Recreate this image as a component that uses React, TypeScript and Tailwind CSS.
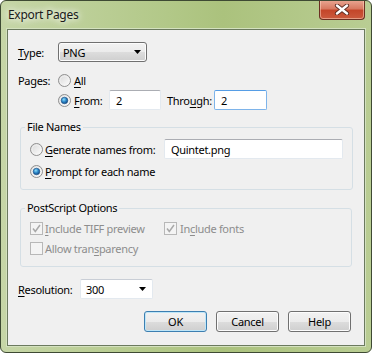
import type { ReactNode } from 'react'

function Radio({ checked = false }: { checked?: boolean }) {
  return (
    <svg width="13" height="13" viewBox="0 0 13 13" className="shrink-0">
      <defs>
        <linearGradient id="rbg" x1="0" y1="0" x2="1" y2="1">
          <stop offset="0" stopColor="#d6d6d6" />
          <stop offset="1" stopColor="#ffffff" />
        </linearGradient>
        <radialGradient id="rdot" cx="0.4" cy="0.35" r="0.7">
          <stop offset="0" stopColor="#8fe0fa" />
          <stop offset="0.5" stopColor="#2c86c8" />
          <stop offset="1" stopColor="#10427a" />
        </radialGradient>
      </defs>
      <circle cx="6.5" cy="6.5" r="6" fill="url(#rbg)" stroke="#8f8f8f" />
      <circle cx="6.5" cy="6.5" r="4.5" fill="none" stroke="#f4f4f4" strokeOpacity="0.7" />
      {checked && <circle cx="6.5" cy="6.5" r="3.3" fill="url(#rdot)" stroke="#1b4f86" strokeWidth="0.6" />}
    </svg>
  )
}

function Check({ checked = false }: { checked?: boolean }) {
  return (
    <svg width="13" height="13" viewBox="0 0 13 13" className="shrink-0">
      <rect x="0.5" y="0.5" width="12" height="12" fill="#f4f4f4" stroke="#b8b8b8" />
      {checked && <path d="M3 6.5 L5.3 9.5 L10 3" fill="none" stroke="#a9a9a9" strokeWidth="1.5" />}
    </svg>
  )
}

function Arrow() {
  return (
    <svg width="7" height="4" viewBox="0 0 7 4" className="shrink-0">
      <path d="M0 0 H7 L3.5 4 Z" fill="#000" />
    </svg>
  )
}

function TextBox({ value, focused = false, className = '' }: { value: string; focused?: boolean; className?: string }) {
  return (
    <div
      className={
        'h-[20px] bg-white flex items-center pl-[6px] border rounded-[2px] ' +
        (focused ? 'border-[#7eb4ea] border-t-[#569de5] ' : 'border-[#e3e9ef] border-t-[#abadb3] ') +
        className
      }
    >
      {value}
    </div>
  )
}

function Btn({ children, primary = false }: { children: ReactNode; primary?: boolean }) {
  return (
    <div
      className={
        'w-[63px] h-[21px] rounded-[3px] border flex items-center justify-center bg-[linear-gradient(#f2f2f2_0%,#ebebeb_50%,#dddddd_50%,#cfcfcf_100%)] ' +
        (primary ? 'border-[#3c7fb1] shadow-[inset_0_0_0_1px_#bfe6f8]' : 'border-[#707070] shadow-[inset_0_0_0_1px_#fcfcfc]')
      }
    >
      {children}
    </div>
  )
}

const U = ({ children }: { children: ReactNode }) => <span className="underline underline-offset-[2px]">{children}</span>

export default function App() {
  return (
    <div className="w-[372px] h-[353px] rounded-[6px] border border-[#3e4a33] bg-[linear-gradient(90deg,#c6d6a7_0%,#b2c888_45%,#abc27d_60%,#b9cd93_100%)] flex flex-col font-['Noto_Sans',sans-serif] text-[11px] tracking-[-0.3px] text-black leading-none overflow-hidden">
      {/* title bar */}
      <div className="h-[28px] flex items-start pl-[7px] pr-[6px] shrink-0">
        <span className="mt-[7px] text-[12px] leading-[14px] text-[#1a1a1a] [text-shadow:0_0_6px_#fff,0_0_10px_#fff]">Export Pages</span>
        <div className="ml-auto -mt-[1px] w-[46px] h-[20px] rounded-b-[4px] border border-[#6b2f22] border-t-0 bg-[linear-gradient(#eaa894_0%,#d87a62_45%,#c4462a_55%,#cb5a3e_100%)] shadow-[inset_0_0_0_1px_rgba(255,220,200,0.5)] flex items-center justify-center">
          <svg width="16" height="11" viewBox="0 0 16 11">
            <path d="M3 1.5 L13 9.5 M13 1.5 L3 9.5" stroke="#5a2a20" strokeWidth="4.2" strokeLinecap="round" />
            <path d="M3 1.5 L13 9.5 M13 1.5 L3 9.5" stroke="#ffffff" strokeWidth="2.4" strokeLinecap="round" />
          </svg>
        </div>
      </div>

      {/* client */}
      <div className="flex-1 mx-[6px] mb-[6px] border border-[#6b7a5e] bg-[#f0f0f0] shadow-[0_0_0_1px_#d4e1bf] pt-[12px] flex flex-col">
        <div className="flex items-center h-[20px] pl-[10px]">
          <span className="w-[40px]"><U>T</U>ype:</span>
          <div className="w-[89px] h-[20px] rounded-[3px] border border-[#707070] bg-[linear-gradient(#f2f2f2_0%,#ebebeb_50%,#dddddd_50%,#cfcfcf_100%)] shadow-[inset_0_0_0_1px_#fcfcfc] flex items-center pl-[4px] pr-[5px] justify-between">
            <span>PNG</span>
            <Arrow />
          </div>
        </div>

        <div className="flex items-center h-[20px] mt-[8px] pl-[10px]">
          <span className="w-[40px]">Pages:</span>
          <Radio />
          <span className="ml-[3px]"><U>A</U>ll</span>
        </div>
        <div className="flex items-center h-[20px] pl-[50px]">
          <Radio checked />
          <span className="ml-[3px] w-[35px]"><U>F</U>rom:</span>
          <TextBox value="2" className="w-[52px]" />
          <span className="ml-[6px] w-[47px]">Thro<U>u</U>gh:</span>
          <TextBox value="2" focused className="w-[53px]" />
        </div>

        <fieldset className="mx-[12px] mt-[9px] border border-[#d5dfe5] rounded-[3px] px-[9px] pt-[4px] pb-[8px]">
          <legend className="ml-[-5px] px-[2px] leading-[16px]">File Names</legend>
          <div className="flex items-center h-[20px]">
            <Radio />
            <span className="ml-[2px] w-[119px]"><U>G</U>enerate names from:</span>
            <TextBox value="Quintet.png" className="w-[179px] h-[19px]" />
          </div>
          <div className="flex items-center h-[20px] mt-[2px]">
            <Radio checked />
            <span className="ml-[2px]"><U>P</U>rompt for each name</span>
          </div>
        </fieldset>

        <fieldset className="mx-[12px] mt-[10px] border border-[#d5dfe5] rounded-[3px] px-[9px] pt-[2px] pb-[8px] text-[#8d8d8d]">
          <legend className="ml-[-5px] px-[2px] leading-[16px] text-black">PostScript Options</legend>
          <div className="flex items-center h-[20px]">
            <Check checked />
            <span className="ml-[2px] w-[119px]"><U>I</U>nclude TIFF preview</span>
            <Check checked />
            <span className="ml-[3px]">In<U>c</U>lude fonts</span>
          </div>
          <div className="flex items-center h-[20px]">
            <Check />
            <span className="ml-[2px]">Allow tran<U>s</U>parency</span>
          </div>
        </fieldset>

        <div className="flex items-center h-[20px] mt-[12px] pl-[10px]">
          <span className="w-[62px]"><U>R</U>esolution:</span>
          <div className="w-[73px] h-[20px] bg-white border border-[#e3e9ef] border-t-[#c9ced6] rounded-[2px] flex items-center pl-[5px] pr-[6px] justify-between">
            <span>300</span>
            <Arrow />
          </div>
        </div>

        <div className="flex justify-end gap-[9px] pr-[13px] mt-[12px]">
          <Btn primary>OK</Btn>
          <Btn>Cancel</Btn>
          <Btn>Help</Btn>
        </div>
      </div>
    </div>
  )
}
